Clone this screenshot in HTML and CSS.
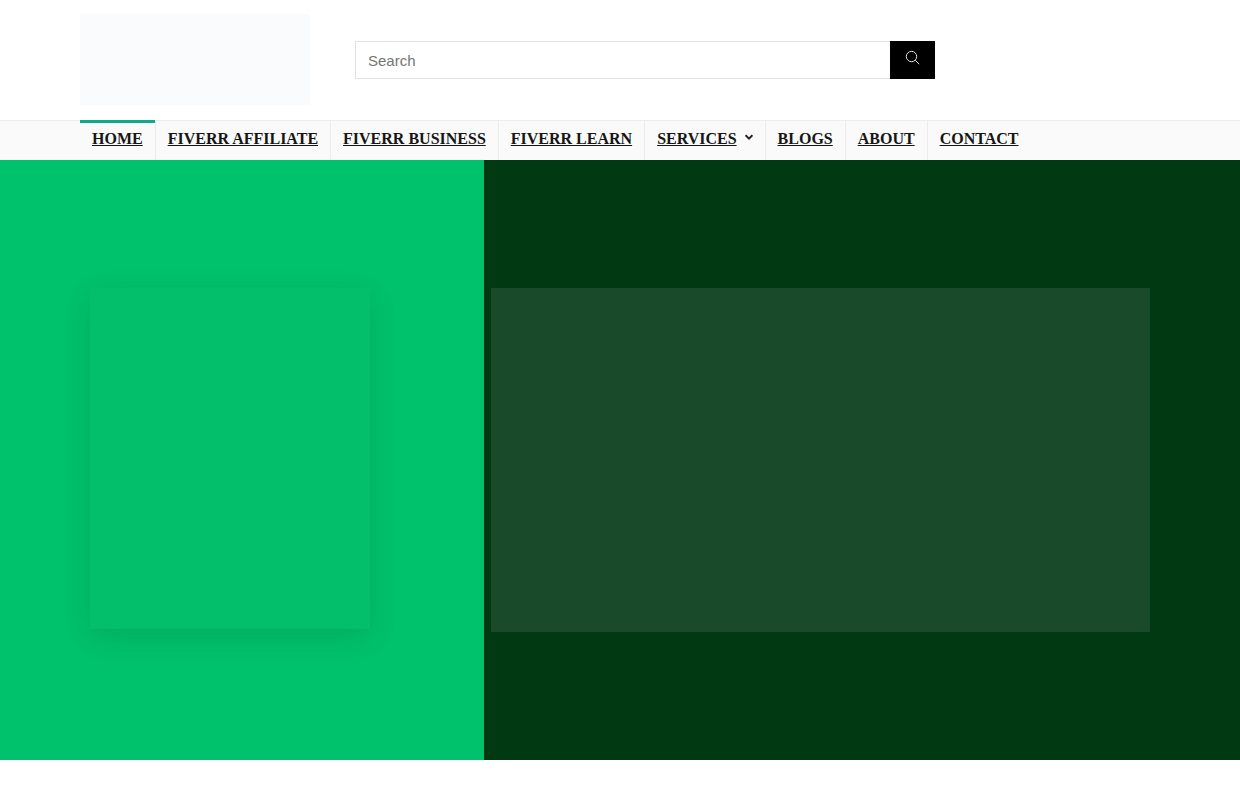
FILE: index.html
```html
<!DOCTYPE html>
<html lang="en">
<head>
<meta charset="utf-8">
<title>Fiverr</title>
<link rel="stylesheet" href="styles.css">
</head>
<body>
<header class="masthead">
  <div class="logo"></div>
  <form class="search">
    <input class="search-input" type="text" placeholder="Search">
    <button class="search-btn" type="button" aria-label="Search">
      <svg width="16" height="16" viewBox="0 0 16 16" fill="none" stroke="#e4e4e4" stroke-width="1"><circle cx="6.5" cy="6.5" r="5.2"/><path d="M10.2 10.2 14.2 14.2"/></svg>
    </button>
  </form>
</header>
<nav class="nav">
  <ul class="menu">
    <li class="item active"><a href="#">HOME</a></li>
    <li class="item"><a href="#">FIVERR AFFILIATE</a></li>
    <li class="item"><a href="#">FIVERR BUSINESS</a></li>
    <li class="item"><a href="#">FIVERR LEARN</a></li>
    <li class="item has-sub"><a href="#">SERVICES</a>
      <svg class="caret" width="8" height="7" viewBox="0 0 8 7" fill="none" stroke="#222" stroke-width="1.9"><path d="M.6 1.2 4 4.6 7.4 1.2"/></svg>
    </li>
    <li class="item"><a href="#">BLOGS</a></li>
    <li class="item"><a href="#">ABOUT</a></li>
    <li class="item last"><a href="#">CONTACT</a></li>
  </ul>
</nav>
<main class="hero">
  <section class="hero-left"><div class="card"></div></section>
  <section class="hero-right"><div class="panel"></div></section>
</main>
</body>
</html>
```
FILE: styles.css
```css
* { box-sizing: border-box; }
html, body { margin: 0; padding: 0; background: #fff; }
body { height: 800px; overflow: hidden; font-family: "Liberation Serif", serif; }

.masthead { height: 120px; padding: 14px 0 0 80px; display: flex; align-items: flex-start; }
.logo { width: 230px; height: 91px; background: #f9fbfd; }
.search { display: flex; width: 580px; height: 38px; margin: 27px 0 0 45px; }
.search-input { flex: 1; min-width: 0; height: 38px; border: 1px solid #e2e2e2; border-right: 0; padding: 0 12px; font: 15px "Liberation Sans", sans-serif; color: #444; background: #fff; outline: 0; }
.search-input::placeholder { color: #757575; opacity: 1; }
.search-btn { width: 45px; height: 38px; border: 0; padding: 0 0 4px; background: #000; display: flex; align-items: center; justify-content: center; }

.nav { height: 40px; background: #fafafa; border-top: 1px solid #ececec; padding-left: 80px; }
.menu { display: flex; list-style: none; margin: 0; padding: 0; height: 39px; }
.item { display: flex; align-items: center; padding: 0 12px 3px; border-right: 1px solid #ececec; height: 39px; font-size: 16px; font-weight: 700; position: relative; }
.item a { color: #161616; text-decoration: underline; }
.item.last { border-right: 0; }
.item.active { box-shadow: inset 0 3px 0 #11a98c; margin-top: -1px; height: 40px; padding-top: 1px; }
.caret { margin-left: 8px; margin-bottom: 3px; }

.hero { display: flex; height: 600px; }
.hero-left { width: 484px; background: #00c26d; padding: 128px 0 0 90px; }
.card { width: 280px; height: 341px; background: #03bf6b; box-shadow: 0 8px 30px rgba(0, 60, 30, .16); }
.hero-right { flex: 1; background: #003912; padding: 128px 0 0 7px; }
.panel { width: 659px; height: 344px; background: #194a2a; }
```
